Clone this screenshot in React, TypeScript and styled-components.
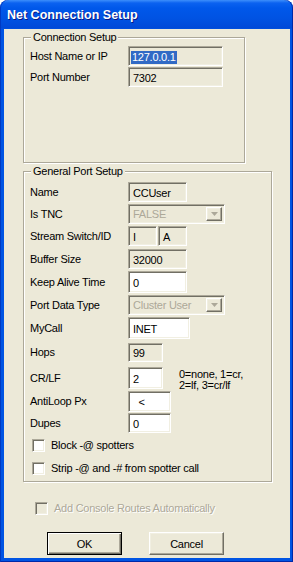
import React from 'react';
import styled, { createGlobalStyle, css } from 'styled-components';

const GlobalStyle = createGlobalStyle`
  html, body {
    margin: 0;
    padding: 0;
    background: #ffffff;
  }
  body {
    font-family: 'Liberation Sans', Arial, sans-serif;
    font-size: 11px;
  }
`;

// classic 3D sunken edge used by edits, combos and checkboxes
const sunken = css`
  box-sizing: border-box;
  border-style: solid;
  border-width: 1px;
  border-color: #aca899 #ffffff #ffffff #aca899;
  box-shadow: inset 1px 1px 0 #716f64, inset -1px -1px 0 #f1efe2;
`;

const raised = css`
  box-sizing: border-box;
  border-style: solid;
  border-width: 1px;
  border-color: #ffffff #716f64 #716f64 #ffffff;
  box-shadow: inset -1px -1px 0 #aca899, inset 1px 1px 0 #f1efe2;
`;

const Frame = styled.div`
  width: 293px;
  height: 562px;
  box-sizing: border-box;
  display: flex;
  flex-direction: column;
  padding: 0 3px 4px 4px;
  border-radius: 8px 8px 0 0;
  overflow: hidden;
  background: linear-gradient(
      to bottom,
      #3d8ffb 0px,
      #0b62f0 3px,
      #0058ea 8px,
      #0053e3 18px,
      #0049d8 28px,
      #0054e3 29px
    );
  box-shadow: inset 1px 0 0 #0039c2, inset -1px 0 0 #0029a8, inset 0 -1px 0 #0029a8;
`;

const TitleBar = styled.div`
  height: 29px;
  flex: none;
  display: flex;
  align-items: center;
  padding-left: 3px;
  color: #ffffff;
  font-weight: bold;
  font-size: 12.5px;
  text-shadow: 1px 1px 0 #0a1883;
  letter-spacing: 0;
`;

const Client = styled.div`
  flex: 1;
  display: flex;
  flex-direction: column;
  background: #ece9d8;
  padding: 2px 0 0 19px;
  color: #000000;
  letter-spacing: -0.25px;
  line-height: 13px;
`;

const Group = styled.fieldset<{ $w: number; $h: number; $mt?: number }>`
  box-sizing: border-box;
  width: ${(p) => p.$w}px;
  height: ${(p) => p.$h}px;
  margin: ${(p) => p.$mt ?? 0}px 0 0 0;
  padding: 0 0 0 6px;
  min-width: 0;
  border: 1px solid #aca899;
  box-shadow: inset 1px 1px 0 #ffffff, 1px 1px 0 #ffffff;
  display: flex;
  flex-direction: column;
`;

const Legend = styled.legend`
  margin-left: 1px;
  padding: 0 2px;
  line-height: 13px;
  background: #ece9d8;
`;

const Row = styled.div<{ $mt: number; $h: number }>`
  display: flex;
  align-items: center;
  height: ${(p) => p.$h}px;
  margin-top: ${(p) => p.$mt}px;
`;

const Label = styled.span`
  width: 98px;
  flex: none;
`;

const Edit = styled.div<{ $w: number; $white?: boolean }>`
  ${sunken};
  width: ${(p) => p.$w}px;
  height: 100%;
  padding: 2px 0 0 4px;
  display: flex;
  align-items: center;
  white-space: pre;
  background: ${(p) => (p.$white ? '#ffffff' : '#ece9d8')};
  & + & {
    margin-left: 1px;
  }
`;

const Selected = styled.span`
  background: #316ac5;
  color: #ffffff;
  padding: 0 1px;
  margin-left: -2px;
`;

const Combo = styled.div<{ $w: number }>`
  ${sunken};
  width: ${(p) => p.$w}px;
  height: 100%;
  display: flex;
  align-items: center;
  padding: 2px 2px 2px 4px;
  background: #ece9d8;
  color: #aca899;
`;

const ComboText = styled.span`
  flex: 1;
  padding-top: 1px;
`;

const ComboButton = styled.div`
  ${raised};
  width: 16px;
  height: 100%;
  display: flex;
  align-items: center;
  justify-content: center;
  background: #ece9d8;
`;

const Hint = styled.div`
  align-self: flex-start;
  margin: 2px 0 0 16px;
  line-height: 11px;
`;

const CheckRow = styled.label<{ $mt: number; $pl: number; $disabled?: boolean }>`
  display: flex;
  align-items: center;
  gap: 6px;
  margin-top: ${(p) => p.$mt}px;
  padding-left: ${(p) => p.$pl}px;
  height: 13px;
  color: ${(p) => (p.$disabled ? '#aca899' : '#000000')};
  text-shadow: ${(p) => (p.$disabled ? '1px 1px 0 #ffffff' : 'none')};
`;

const Box = styled.span<{ $disabled?: boolean }>`
  ${sunken};
  width: 13px;
  height: 13px;
  flex: none;
  background: ${(p) => (p.$disabled ? '#ece9d8' : '#ffffff')};
`;

const ButtonRow = styled.div`
  display: flex;
  gap: 27px;
  margin: 17px 0 0 24px;
`;

const Button = styled.button<{ $default?: boolean }>`
  ${raised};
  width: 75px;
  height: 23px;
  padding: 0;
  font-family: 'Liberation Sans', Arial, sans-serif;
  font-size: 11px;
  letter-spacing: -0.25px;
  color: #000000;
  background: #ece9d8;
  ${(p) =>
    p.$default &&
    css`
      border: 1px solid #000000;
      box-shadow: inset 1px 1px 0 #ffffff, inset -1px -1px 0 #716f64, inset -2px -2px 0 #aca899;
    `}
`;

const Arrow = () => (
  <svg width="7" height="4" viewBox="0 0 7 4">
    <path d="M0 0h7L3.5 4z" fill="#aca899" />
  </svg>
);

export default function App() {
  return (
    <>
      <GlobalStyle />
      <Frame>
        <TitleBar>Net Connection Setup</TitleBar>
        <Client>
          <Group $w={222} $h={132}>
            <Legend>Connection Setup</Legend>
            <Row $mt={2} $h={20}>
              <Label>Host Name or IP</Label>
              <Edit $w={95}>
                <Selected>127.0.0.1</Selected>
              </Edit>
            </Row>
            <Row $mt={1} $h={20}>
              <Label>Port Number</Label>
              <Edit $w={95}>7302</Edit>
            </Row>
          </Group>

          <Group $w={249} $h={317} $mt={2}>
            <Legend>General Port Setup</Legend>
            <Row $mt={4} $h={20}>
              <Label>Name</Label>
              <Edit $w={59}>CCUser</Edit>
            </Row>
            <Row $mt={2} $h={20}>
              <Label>Is TNC</Label>
              <Combo $w={97}>
                <ComboText>FALSE</ComboText>
                <ComboButton>
                  <Arrow />
                </ComboButton>
              </Combo>
            </Row>
            <Row $mt={2} $h={20}>
              <Label>Stream Switch/ID</Label>
              <Edit $w={29}>I</Edit>
              <Edit $w={29}>A</Edit>
            </Row>
            <Row $mt={3} $h={20}>
              <Label>Buffer Size</Label>
              <Edit $w={59}>32000</Edit>
            </Row>
            <Row $mt={2} $h={22}>
              <Label>Keep Alive Time</Label>
              <Edit $w={59} $white>0</Edit>
            </Row>
            <Row $mt={2} $h={20}>
              <Label>Port Data Type</Label>
              <Combo $w={97}>
                <ComboText>Cluster User</ComboText>
                <ComboButton>
                  <Arrow />
                </ComboButton>
              </Combo>
            </Row>
            <Row $mt={2} $h={22}>
              <Label>MyCall</Label>
              <Edit $w={62} $white>INET</Edit>
            </Row>
            <Row $mt={4} $h={19}>
              <Label>Hops</Label>
              <Edit $w={35}>99</Edit>
            </Row>
            <Row $mt={5} $h={22}>
              <Label>CR/LF</Label>
              <Edit $w={35} $white>2</Edit>
              <Hint>
                0=none, 1=cr,
                <br />
                2=lf, 3=cr/lf
              </Hint>
            </Row>
            <Row $mt={2} $h={21}>
              <Label>AntiLoop Px</Label>
              <Edit $w={43} $white>{'  <'}</Edit>
            </Row>
            <Row $mt={1} $h={20}>
              <Label>Dupes</Label>
              <Edit $w={43} $white>0</Edit>
            </Row>
            <CheckRow $mt={6} $pl={2}>
              <Box />
              Block -@ spotters
            </CheckRow>
            <CheckRow $mt={10} $pl={2}>
              <Box />
              Strip -@ and -# from spotter call
            </CheckRow>
          </Group>

          <CheckRow $mt={20} $pl={12} $disabled>
            <Box $disabled />
            Add Console Routes Automatically
          </CheckRow>

          <ButtonRow>
            <Button $default>OK</Button>
            <Button>Cancel</Button>
          </ButtonRow>
        </Client>
      </Frame>
    </>
  );
}
